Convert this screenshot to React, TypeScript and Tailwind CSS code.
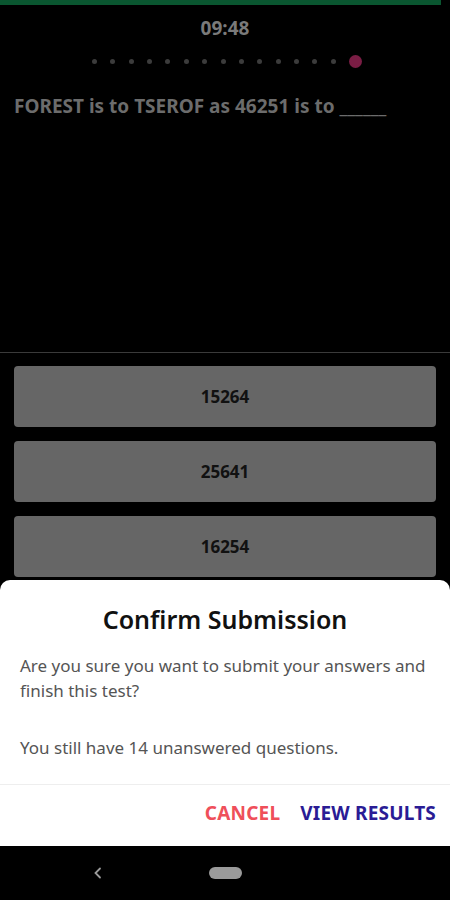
import React from 'react';

const font = { fontFamily: '"Noto Sans", "Open Sans", sans-serif' };

const options = ['15264', '25641', '16254', '14625'];

const ProgressDots: React.FC<{ total: number; current: number }> = ({ total, current }) => (
  <div className="flex items-center justify-center gap-[13.4px] h-[14px] mt-[16px] ml-[4px]">
    {Array.from({ length: total }).map((_, i) =>
      i === current ? (
        <span key={i} className="w-[13px] h-[13px] rounded-full bg-[#7a1d44]" />
      ) : (
        <span key={i} className="w-[5px] h-[5px] rounded-full bg-[#3c3c3c]" />
      )
    )}
  </div>
);

const OptionButton: React.FC<{ label: string }> = ({ label }) => (
  <div className="h-[61px] shrink-0 rounded-[4px] bg-[#666666] flex items-center justify-center text-[17px] font-bold text-[#111111]">
    {label}
  </div>
);

export default function App() {
  return (
    <div className="relative w-[450px] h-[900px] bg-black overflow-hidden flex flex-col" style={font}>
      {/* Question screen (dimmed behind dialog) */}
      <div className="flex-1 flex flex-col min-h-0">
        <div className="h-[5px] w-[441px] bg-[#0a5630]" />
        <div className="text-center text-[19px] font-bold text-[#7a7a7a] leading-none mt-[14px]">09:48</div>
        <ProgressDots total={15} current={14} />
        <p className="px-[14px] mt-[25px] text-[19px] font-bold text-[#6c6c6c] leading-snug">
          FOREST is to TSEROF as 46251 is to ______
        </p>
        <div className="flex-1" />
        <div className="h-[1px] bg-[#3a3a3a]" />
        <div className="h-[493px] shrink-0 flex flex-col gap-[14px] px-[14px] pt-[13px] overflow-hidden">
          {options.map((o) => (
            <OptionButton key={o} label={o} />
          ))}
        </div>
      </div>

      {/* Android nav bar */}
      <div className="h-[54px] shrink-0 bg-black flex items-center relative">
        <svg className="absolute left-[93px] top-[21px]" width="10" height="12" viewBox="0 0 10 12">
          <path d="M7 1.5 L2.5 6 L7 10.5" fill="none" stroke="#9a9a9a" strokeWidth="1.8" strokeLinecap="round" />
        </svg>
        <span className="absolute left-[209px] top-[21px] w-[33px] h-[12px] rounded-full bg-[#9a9a9a]" />
      </div>

      {/* Confirm dialog sheet */}
      <div className="absolute left-0 right-0 bottom-[54px] h-[266px] bg-white rounded-t-[10px] flex flex-col">
        <h2 className="text-center text-[25px] font-semibold text-[#111111] mt-[23px] leading-[32px]">
          Confirm Submission
        </h2>
        <div className="px-[20px] mt-[18px] text-[17px] leading-[25px] text-[#555555]">
          <p>Are you sure you want to submit your answers and finish this test?</p>
          <p className="mt-[32px]">You still have 14 unanswered questions.</p>
        </div>
        <div className="flex-1" />
        <div className="h-[1px] bg-[#eeeeee]" />
        <div className="h-[61px] flex items-center justify-end gap-[20px] pr-[14px] pb-[4px]">
          <button className="text-[19px] font-bold text-[#ef4f5a] tracking-[0.2px]">CANCEL</button>
          <button className="text-[19px] font-bold text-[#2a1c95] tracking-[0.2px]">VIEW RESULTS</button>
        </div>
      </div>
    </div>
  );
}
